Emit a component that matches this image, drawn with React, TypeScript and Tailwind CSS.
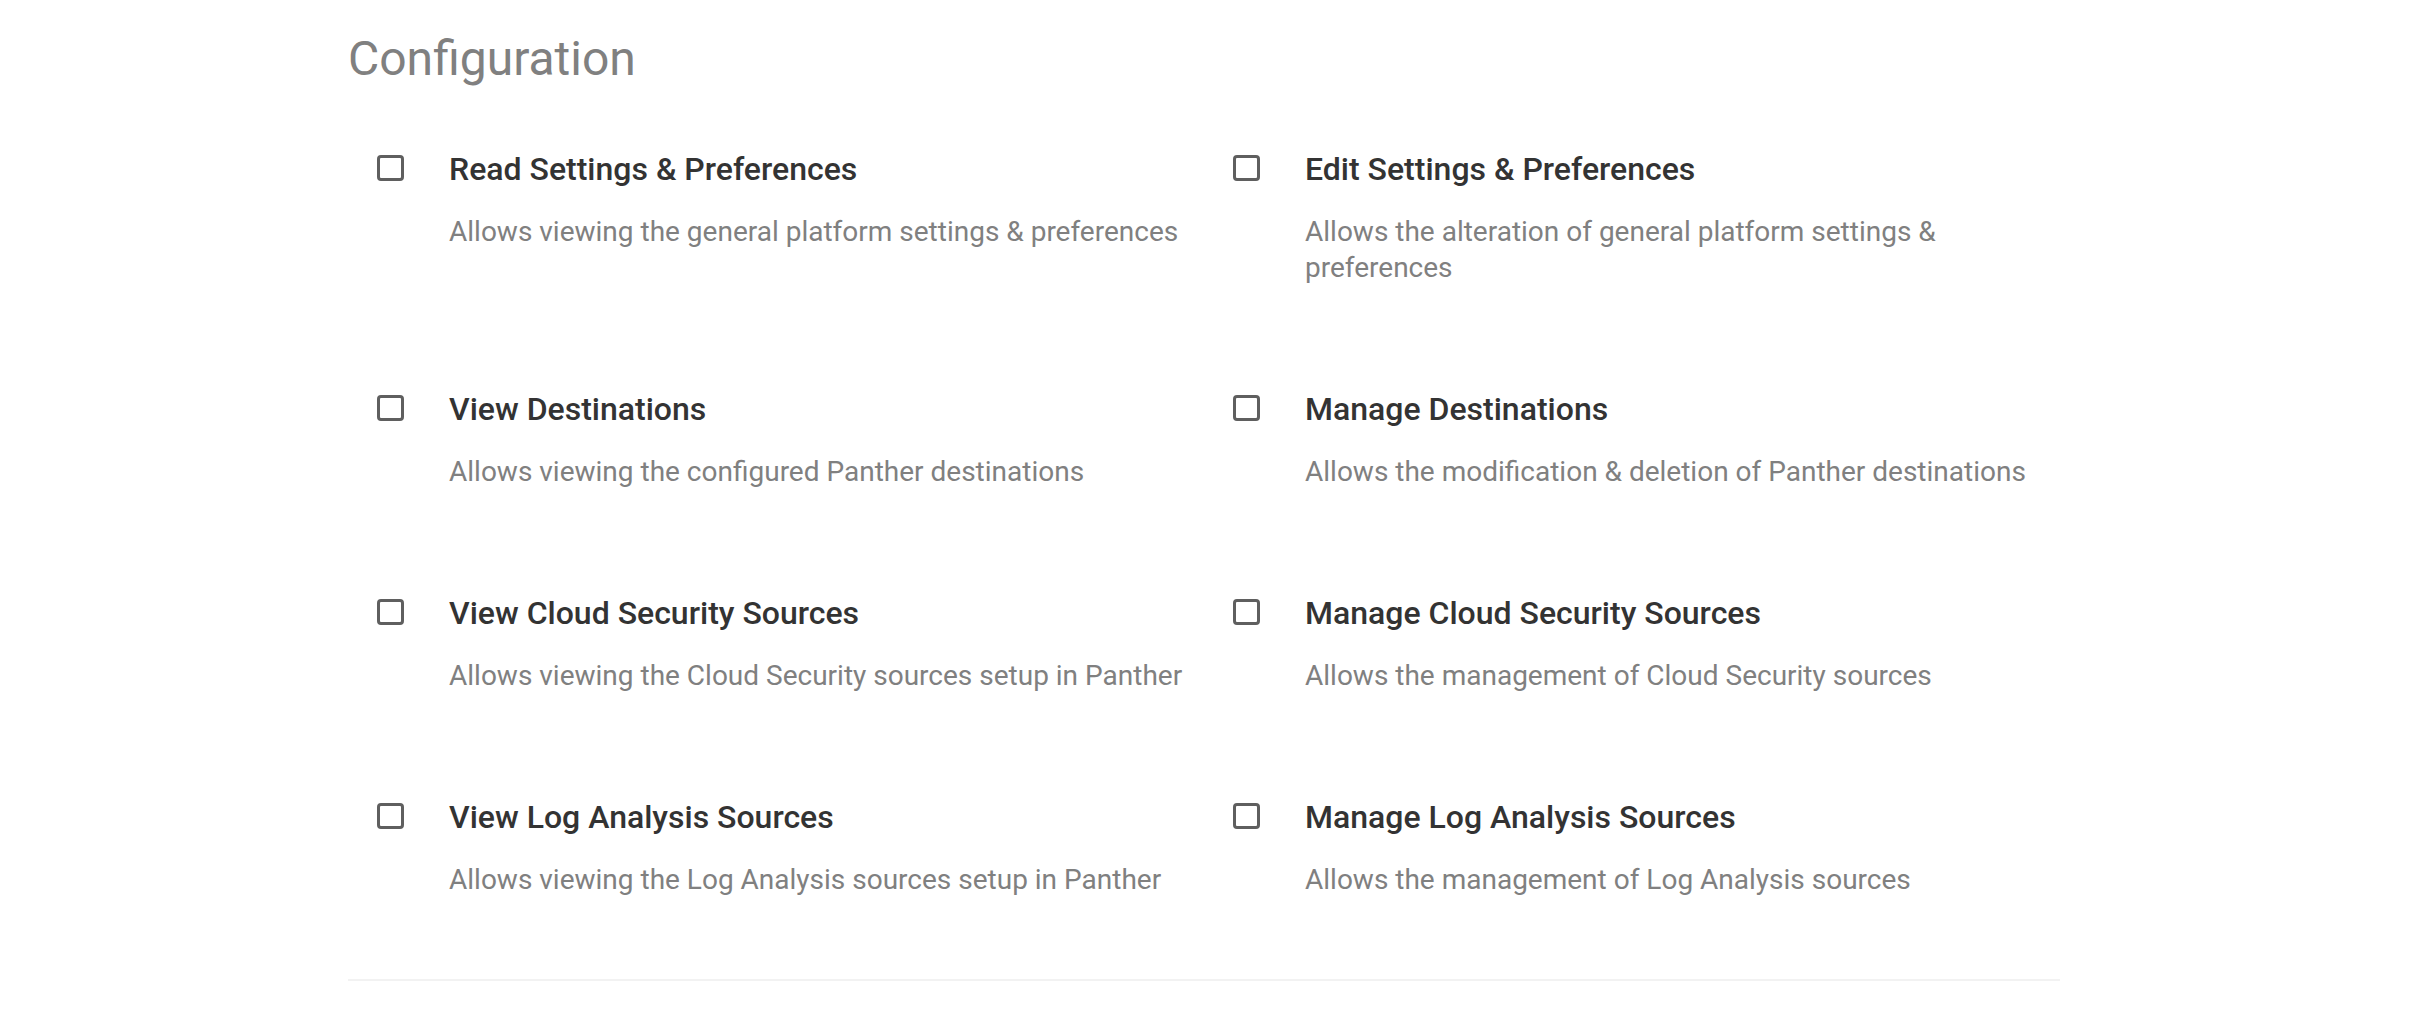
import React from 'react';

type Permission = {
  title: string;
  description: string;
};

const permissions: Permission[] = [
  {
    title: 'Read Settings & Preferences',
    description: 'Allows viewing the general platform settings & preferences',
  },
  {
    title: 'Edit Settings & Preferences',
    description: 'Allows the alteration of general platform settings & preferences',
  },
  {
    title: 'View Destinations',
    description: 'Allows viewing the configured Panther destinations',
  },
  {
    title: 'Manage Destinations',
    description: 'Allows the modification & deletion of Panther destinations',
  },
  {
    title: 'View Cloud Security Sources',
    description: 'Allows viewing the Cloud Security sources setup in Panther',
  },
  {
    title: 'Manage Cloud Security Sources',
    description: 'Allows the management of Cloud Security sources',
  },
  {
    title: 'View Log Analysis Sources',
    description: 'Allows viewing the Log Analysis sources setup in Panther',
  },
  {
    title: 'Manage Log Analysis Sources',
    description: 'Allows the management of Log Analysis sources',
  },
];

const PermissionItem: React.FC<{ item: Permission }> = ({ item }) => {
  return (
    <label className="flex items-start cursor-pointer">
      {/* checkbox */}
      <div className="w-[101px] shrink-0 pl-[29px] pt-[7px]">
        <span className="block w-[27px] h-[26px] rounded-[4px] border-[3px] border-[#5f5f5f]" />
      </div>
      <div className="flex flex-col pr-4">
        <span className="text-[32px] leading-[42px] font-medium text-[#333333]">{item.title}</span>
        <span className="mt-[24px] text-[28px] leading-[36px] text-[#808080]">{item.description}</span>
      </div>
    </label>
  );
};

export default function App() {
  return (
    <div className="min-h-screen bg-white" style={{ fontFamily: 'Roboto, "Noto Sans", sans-serif' }}>
      <div className="w-[1712px] ml-[348px] pt-[31px]">
        <h2 className="text-[48px] leading-[56px] font-normal text-[#808080]">Configuration</h2>

        <div className="grid grid-cols-2 gap-y-[102px] mt-[61px]">
          {permissions.map((p) => (
            <PermissionItem key={p.title} item={p} />
          ))}
        </div>

        <div className="mt-[81px] h-[2px] bg-[#f2f2f2]" />
      </div>
    </div>
  );
}
